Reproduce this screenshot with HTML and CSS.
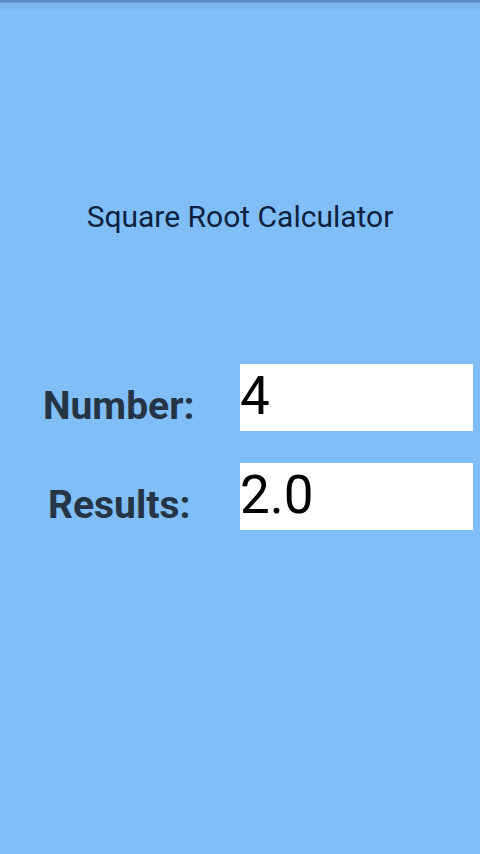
FILE: index.html
```html
<!DOCTYPE html>
<html>
<head>
<meta charset="utf-8">
<link rel="stylesheet" href="styles.css">
</head>
<body>
<div class="screen">
  <div class="topbar"></div>
  <h1 class="title">Square Root Calculator</h1>
  <div class="form">
    <div class="row">
      <div class="label">Number:</div>
      <div class="field">4</div>
    </div>
    <div class="row row2">
      <div class="label label2">Results:</div>
      <div class="field">2.0</div>
    </div>
  </div>
</div>
</body>
</html>
```
FILE: styles.css
```css
html, body {
  margin: 0;
  padding: 0;
  background: #80bef8;
}
.screen {
  width: 480px;
  height: 854px;
  background: #80bef8;
  font-family: Roboto, "Liberation Sans", sans-serif;
  overflow: hidden;
}
.topbar {
  height: 10px;
  background: linear-gradient(to bottom, #5b8bc4 0px, #5b8bc4 2px, #7cb3ea 3px, #7fb9f2 10px);
}
.title {
  margin: 190px 0 0 0;
  font-size: 30px;
  font-weight: 400;
  color: #0e2240;
  text-align: center;
  line-height: 34px;
  padding-left: 0;
}
.form {
  margin-top: 130px;
  display: flex;
  flex-direction: column;
  gap: 32px;
}
.row {
  display: flex;
  align-items: center;
}
.label {
  width: 240px;
  box-sizing: border-box;
  padding-left: 43px;
  padding-top: 16px;
  font-size: 39px;
  font-weight: 700;
  color: #263545;
}
.label2 {
  padding-left: 48px;
}
.field {
  width: 233px;
  height: 67px;
  background: #ffffff;
  font-size: 53px;
  color: #000;
  line-height: 64px;
  padding-left: 0;
  box-sizing: border-box;
}
```
